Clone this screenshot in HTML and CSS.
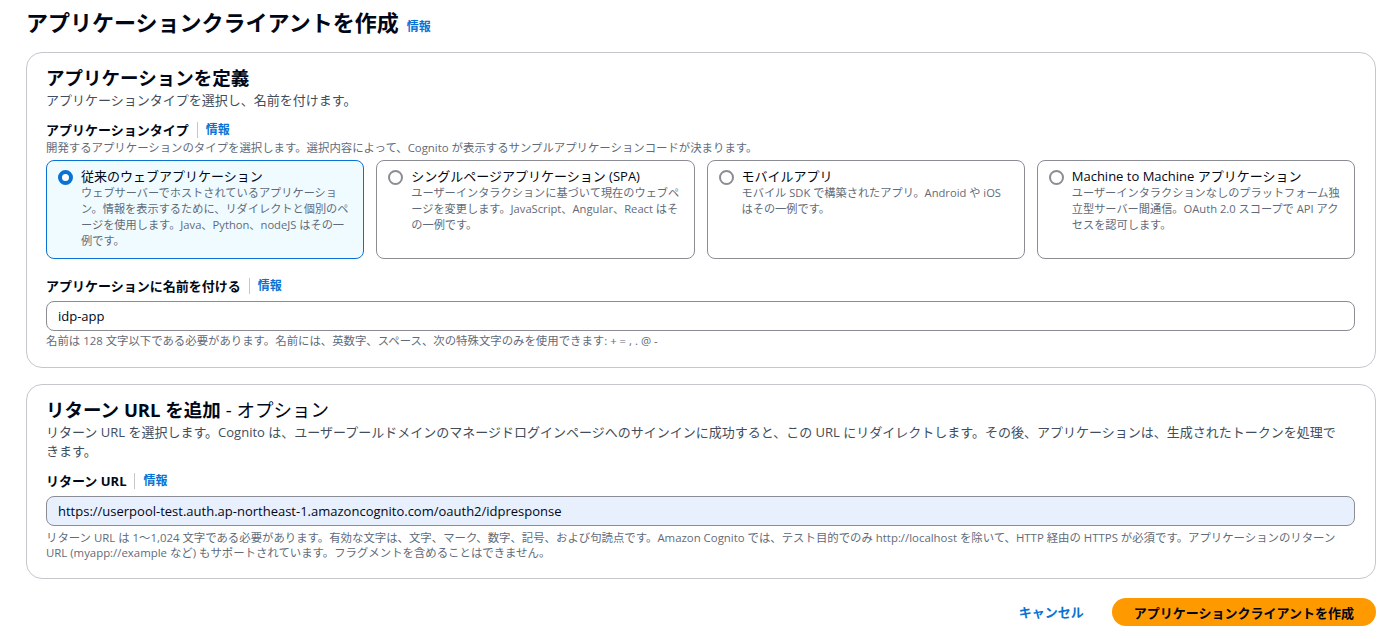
FILE: index.html
```html
<!DOCTYPE html>
<html lang="ja">
<head>
<meta charset="utf-8">
<title>アプリケーションクライアントを作成</title>
<link rel="stylesheet" href="styles.css">
</head>
<body>
<div class="page">
  <h1 class="page-title">アプリケーションクライアントを作成 <a class="info info-title" href="#">情報</a></h1>

  <section class="container">
    <h2 class="container-title">アプリケーションを定義</h2>
    <p class="container-desc">アプリケーションタイプを選択し、名前を付けます。</p>

    <div class="field field-first">
      <div class="label-row"><span class="label">アプリケーションタイプ</span><span class="divider"></span><a class="info" href="#">情報</a></div>
      <p class="field-desc">開発するアプリケーションのタイプを選択します。選択内容によって、Cognito が表示するサンプルアプリケーションコードが決まります。</p>
      <div class="tiles">
        <label class="tile tile-selected">
          <span class="radio radio-on"></span>
          <span class="tile-body">
            <span class="tile-title">従来のウェブアプリケーション</span>
            <span class="tile-desc">ウェブサーバーでホストされているアプリケーション。情報を表示するために、リダイレクトと個別のページを使用します。Java、Python、nodeJS はその一例です。</span>
          </span>
        </label>
        <label class="tile">
          <span class="radio"></span>
          <span class="tile-body">
            <span class="tile-title">シングルページアプリケーション (SPA)</span>
            <span class="tile-desc">ユーザーインタラクションに基づいて現在のウェブページを変更します。JavaScript、Angular、React はその一例です。</span>
          </span>
        </label>
        <label class="tile">
          <span class="radio"></span>
          <span class="tile-body">
            <span class="tile-title">モバイルアプリ</span>
            <span class="tile-desc">モバイル SDK で構築されたアプリ。Android や iOS はその一例です。</span>
          </span>
        </label>
        <label class="tile">
          <span class="radio"></span>
          <span class="tile-body">
            <span class="tile-title">Machine to Machine アプリケーション</span>
            <span class="tile-desc">ユーザーインタラクションなしのプラットフォーム独立型サーバー間通信。OAuth 2.0 スコープで API アクセスを認可します。</span>
          </span>
        </label>
      </div>
    </div>

    <div class="field field-name">
      <div class="label-row"><span class="label">アプリケーションに名前を付ける</span><span class="divider"></span><a class="info" href="#">情報</a></div>
      <div class="input">idp-app</div>
      <p class="hint">名前は 128 文字以下である必要があります。名前には、英数字、スペース、次の特殊文字のみを使用できます: + = , . @ -</p>
    </div>
  </section>

  <section class="container container-2">
    <h2 class="container-title">リターン URL を追加 <span class="optional">- オプション</span></h2>
    <p class="container-desc desc-2">リターン URL を選択します。Cognito は、ユーザープールドメインのマネージドログインページへのサインインに成功すると、この URL にリダイレクトします。その後、アプリケーションは、生成されたトークンを処理できます。</p>

    <div class="field field-url">
      <div class="label-row"><span class="label">リターン URL</span><span class="divider"></span><a class="info" href="#">情報</a></div>
      <div class="input input-filled">https://userpool-test.auth.ap-northeast-1.amazoncognito.com/oauth2/idpresponse</div>
      <p class="hint hint-2">リターン URL は 1～1,024 文字である必要があります。有効な文字は、文字、マーク、数字、記号、および句読点です。Amazon Cognito では、テスト目的でのみ http://localhost を除いて、HTTP 経由の HTTPS が必須です。アプリケーションのリターン URL (myapp://example など) もサポートされています。フラグメントを含めることはできません。</p>
    </div>
  </section>

  <div class="actions">
    <a class="btn-link" href="#">キャンセル</a>
    <a class="btn-primary" href="#">アプリケーションクライアントを作成</a>
  </div>
</div>
</body>
</html>
```

FILE: styles.css
```css
* { box-sizing: border-box; }

html, body {
  margin: 0;
  padding: 0;
  background: #ffffff;
}

body {
  font-family: "Open Sans", "Noto Sans CJK JP", sans-serif;
  color: #000716;
  font-size: 13px;
  line-break: loose;
}

a { text-decoration: none; }

.page {
  padding: 8px 18px 20px 26px;
}

.page-title {
  margin: 0 0 16px 0;
  height: 28px;
  font-size: 22px;
  line-height: 28px;
  font-weight: 700;
  display: flex;
  align-items: baseline;
  gap: 8px;
}

.info {
  color: #0972d3;
  font-size: 12px;
  font-weight: 700;
  line-height: 20px;
}

.container {
  border: 1px solid #c6c6cd;
  border-radius: 16px;
  padding: 13px 20px 18px 19px;
}

.container-2 {
  margin-top: 16px;
  padding-bottom: 18px;
}

.container-title {
  margin: 0;
  font-size: 18.5px;
  line-height: 24px;
  font-weight: 700;
}

.optional {
  font-weight: 400;
}

.container-desc {
  margin: 0;
  font-size: 13px;
  line-height: 20px;
  color: #414d5c;
}

.desc-2 {
  margin-top: 1px;
  line-height: 19px;
  padding-right: 10px;
}

.field-first { margin-top: 10px; }
.field-name { margin-top: 17px; }
.field-url { margin-top: 10px; }

.label-row {
  display: flex;
  align-items: center;
  height: 20px;
}

.label {
  font-weight: 700;
  font-size: 13px;
  line-height: 20px;
}

.divider {
  width: 1px;
  height: 16px;
  background: #c6c6cd;
  margin: 0 8px;
}

.field-desc {
  margin: 0 0 4px 0;
  font-size: 11.4px;
  line-height: 16px;
  color: #5f6b7a;
}

.tiles {
  display: grid;
  grid-template-columns: repeat(4, 1fr);
  gap: 12px;
}

.tile {
  display: flex;
  gap: 8px;
  border: 1px solid #8c8c94;
  border-radius: 8px;
  padding: 6px 12px 9px 11px;
  background: #ffffff;
}

.tile-selected {
  border-color: #0972d3;
  background: #f0fbff;
}

.radio {
  flex: 0 0 auto;
  width: 15px;
  height: 15px;
  margin-top: 3px;
  border: 2px solid #8c8c94;
  border-radius: 50%;
  background: #ffffff;
}

.radio-on {
  border: 4px solid #0972d3;
}

.tile-body {
  display: flex;
  flex-direction: column;
  min-width: 0;
}

.tile-title {
  font-size: 13px;
  line-height: 18px;
}

.tile-desc {
  font-size: 11.2px;
  line-height: 16px;
  color: #5f6b7a;
}

.input {
  margin-top: 5px;
  height: 30px;
  border: 1px solid #8c8c94;
  border-radius: 8px;
  padding: 0 11px;
  font-size: 13px;
  line-height: 28px;
  color: #000716;
  background: #ffffff;
}

.input-filled {
  background: #e8f0fe;
}

.hint {
  margin: 2px 0 0 0;
  font-size: 11.4px;
  line-height: 16px;
  color: #5f6b7a;
}

.hint-2 {
  margin-top: 4px;
  line-height: 15px;
}

.actions {
  margin-top: 19px;
  display: flex;
  justify-content: flex-end;
  align-items: center;
  gap: 28px;
}

.btn-link {
  color: #0972d3;
  font-weight: 700;
  font-size: 13px;
  line-height: 20px;
}

.btn-primary {
  display: inline-flex;
  align-items: center;
  height: 28px;
  padding: 0 22px;
  border-radius: 20px;
  background: #ff9900;
  color: #000716;
  font-weight: 700;
  font-size: 13px;
}
```
